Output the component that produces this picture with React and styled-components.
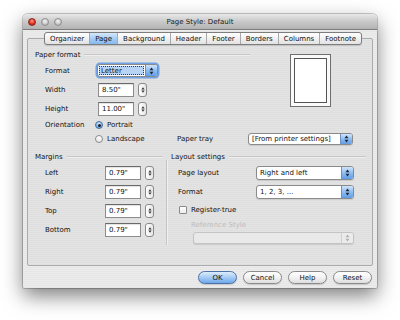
import React from 'react';
import styled, { createGlobalStyle, css } from 'styled-components';

const GlobalStyle = createGlobalStyle`
  body {
    margin: 0;
    background: #ffffff;
    font-family: "DejaVu Sans", "Liberation Sans", sans-serif;
    font-size: 7px;
    color: #111111;
  }
`;

const Stage = styled.div`
  width: 400px;
  height: 320px;
  box-sizing: border-box;
  padding: 14px 0 0 23px;
`;

const Window = styled.div`
  width: 354px;
  height: 274px;
  display: flex;
  flex-direction: column;
  border-radius: 5px 5px 2px 2px;
  overflow: hidden;
  background: repeating-linear-gradient(180deg, #ececec 0 1px, #e6e6e6 1px 2px);
  box-shadow: 0 8px 20px rgba(0, 0, 0, 0.5), 0 0 0 1px rgba(0, 0, 0, 0.2);
`;

const TitleBar = styled.div`
  height: 15px;
  display: grid;
  grid-template-columns: 1fr auto 1fr;
  align-items: center;
  padding: 0 5px;
  background: linear-gradient(180deg, #e8e8e8 0%, #c9c9c9 50%, #b3b3b3 100%);
  border-bottom: 1px solid #7c7c7c;
`;

const Lights = styled.div`
  display: flex;
  gap: 5px;
`;

const Light = styled.span`
  width: 8px;
  height: 8px;
  border-radius: 50%;
  box-sizing: border-box;
  ${(p) =>
    p.$red
      ? css`
          background: radial-gradient(circle at 50% 35%, #ff9a8c 0%, #e2321e 55%, #a01508 100%);
          border: 1px solid #8a2a20;
        `
      : css`
          background: radial-gradient(circle at 50% 35%, #f4f4f4 0%, #c8c8c8 60%, #a8a8a8 100%);
          border: 1px solid #8e8e8e;
        `}
`;

const Title = styled.div`
  color: #1a1a1a;
  font-size: 7px;
`;

const Body = styled.div`
  flex: 1;
  display: flex;
  flex-direction: column;
  padding: 2px 4px 0;
`;

const TabStrip = styled.div`
  position: relative;
  z-index: 1;
  align-self: center;
  display: flex;
  height: 13px;
  margin: 0 0 -7px 6px;
  box-sizing: border-box;
  border: 1px solid #7d7d7d;
  border-radius: 3px;
  overflow: hidden;
  background: linear-gradient(180deg, #ffffff 0%, #f1f1f1 50%, #e2e2e2 100%);
  box-shadow: 0 1px 1px rgba(0, 0, 0, 0.15);
`;

const Tab = styled.div`
  display: flex;
  align-items: center;
  padding: 0 5px;
  border-left: 1px solid #a9a9a9;
  &:first-child {
    border-left: none;
  }
  ${(p) =>
    p.$active &&
    css`
      background: linear-gradient(180deg, #d6e9fb 0%, #a9cdf3 50%, #86b8ee 100%);
    `}
`;

const Panel = styled.div`
  height: 228px;
  box-sizing: border-box;
  border: 1px solid #ababab;
  border-radius: 2px;
  padding: 10px 0 0 7px;
  background: repeating-linear-gradient(180deg, #e3e3e3 0 1px, #dfdfdf 1px 2px);
`;

const SectionHeader = styled.div`
  display: flex;
  align-items: center;
  gap: 4px;
  height: 12px;
  width: ${(p) => p.$width}px;
  &::after {
    content: '';
    flex: 1;
    height: 1px;
    background: #c6c6c6;
    border-bottom: 1px solid #efefef;
  }
`;

const Row = styled.div`
  display: flex;
  align-items: center;
  height: ${(p) => p.$h}px;
  padding-left: ${(p) => p.$pad || 0}px;
`;

const Label = styled.div`
  width: ${(p) => p.$w}px;
  box-sizing: border-box;
  padding-left: ${(p) => (p.$pad === undefined ? 10 : p.$pad)}px;
  flex-shrink: 0;
  color: ${(p) => (p.$disabled ? '#bdbdbd' : '#111111')};
`;

const TopArea = styled.div`
  display: flex;
`;

const Column = styled.div`
  display: flex;
  flex-direction: column;
  width: ${(p) => p.$w}px;
  flex-shrink: 0;
`;

const Preview = styled.div`
  margin: 5px 0 0 40px;
  width: 41px;
  height: 53px;
  box-sizing: border-box;
  border: 1px solid #6e6e6e;
  padding: 3px;
  background: #fafafa;
`;

const PreviewPage = styled.div`
  height: 100%;
  box-sizing: border-box;
  border: 1px solid #555;
  background: #ffffff;
`;

const Input = styled.div`
  width: 36px;
  height: 14px;
  box-sizing: border-box;
  margin-left: ${(p) => p.$ml || 0}px;
  border: 1px solid #8c8c8c;
  border-top-color: #6a6a6a;
  background: #ffffff;
  box-shadow: inset 0 1px 1px rgba(0, 0, 0, 0.12);
  display: flex;
  align-items: center;
  padding-left: 3px;
`;

const StepperBox = styled.div`
  width: 9px;
  height: 14px;
  margin-left: 4px;
  box-sizing: border-box;
  border: 1px solid #8a8a8a;
  border-radius: 3px;
  background: linear-gradient(90deg, #ffffff 0%, #e6e6e6 100%);
  display: flex;
  align-items: center;
  justify-content: center;
`;

const SelectBox = styled.div`
  display: flex;
  width: ${(p) => p.$w}px;
  height: ${(p) => p.$h}px;
  box-sizing: border-box;
  border: 1px solid ${(p) => (p.$disabled ? '#c4c4c4' : '#8a8a8a')};
  border-radius: 3px;
  overflow: hidden;
  background: ${(p) => (p.$disabled ? '#e9e9e9' : '#ffffff')};
  box-shadow: ${(p) =>
    p.$focus ? '0 0 0 1.5px rgba(92, 150, 228, 0.85)' : '0 1px 1px rgba(0,0,0,0.1)'};
`;

const SelectText = styled.div`
  flex: 1;
  display: flex;
  align-items: center;
  padding: 1px;
`;

const SelectValue = styled.span`
  display: flex;
  align-items: center;
  height: 100%;
  padding: 0 2px;
  ${(p) =>
    p.$focus &&
    css`
      flex: 1;
      background: #b7d4f6;
      outline: 1px dotted #3a3a3a;
      outline-offset: -1px;
    `}
`;

const ArrowCap = styled.div`
  width: 11px;
  display: flex;
  align-items: center;
  justify-content: center;
  border-left: 1px solid ${(p) => (p.$disabled ? '#d0d0d0' : '#6e8fbf')};
  background: ${(p) =>
    p.$disabled
      ? '#ebebeb'
      : 'linear-gradient(180deg, #cfe4fb 0%, #8fbdf0 50%, #5f9ce6 100%)'};
`;

const RadioDot = styled.span`
  width: 8px;
  height: 8px;
  box-sizing: border-box;
  border-radius: 50%;
  flex-shrink: 0;
  display: flex;
  align-items: center;
  justify-content: center;
  ${(p) =>
    p.$on
      ? css`
          border: 1px solid #4a6f9f;
          background: radial-gradient(circle at 50% 30%, #d9ebfc 0%, #7fb2ec 60%, #4e8ad8 100%);
          &::after {
            content: '';
            width: 3px;
            height: 3px;
            border-radius: 50%;
            background: #1a2330;
          }
        `
      : css`
          border: 1px solid #8a8a8a;
          background: linear-gradient(180deg, #ffffff 0%, #e6e6e6 100%);
        `}
`;

const RadioItem = styled.div`
  display: flex;
  align-items: center;
  gap: 4px;
  width: ${(p) => (p.$w ? `${p.$w}px` : 'auto')};
  flex-shrink: 0;
`;

const CheckBox = styled.span`
  width: 8px;
  height: 8px;
  box-sizing: border-box;
  border: 1px solid #8a8a8a;
  border-radius: 1px;
  background: linear-gradient(180deg, #ffffff 0%, #ececec 100%);
  margin-right: 4px;
`;

const BottomArea = styled.div`
  display: flex;
  margin-top: 5px;
`;

const Divider = styled.div`
  width: 1px;
  margin: 9px 3px 0 3px;
  background: #c4c4c4;
  border-right: 1px solid #f0f0f0;
`;

const ButtonRow = styled.div`
  display: flex;
  justify-content: flex-end;
  gap: 6px;
  padding: 5px 1px 0 0;
`;

const Button = styled.div`
  width: 39px;
  height: 13px;
  box-sizing: border-box;
  border-radius: 7px;
  display: flex;
  align-items: center;
  justify-content: center;
  border: 1px solid ${(p) => (p.$primary ? '#4f72a6' : '#8a8a8a')};
  background: ${(p) =>
    p.$primary
      ? 'linear-gradient(180deg, #dcecfc 0%, #a5cbf4 50%, #6ea9ec 100%)'
      : 'linear-gradient(180deg, #ffffff 0%, #f2f2f2 50%, #dedede 100%)'};
  box-shadow: 0 1px 1px rgba(0, 0, 0, 0.15);
`;

const UpDown = ({ color = '#1d2735', w = 5, h = 8 }) => (
  <svg width={w} height={h} viewBox="0 0 5 8">
    <polygon points="0.5,3.3 2.5,0.6 4.5,3.3" fill={color} />
    <polygon points="0.5,4.7 2.5,7.4 4.5,4.7" fill={color} />
  </svg>
);

const Stepper = () => (
  <StepperBox>
    <UpDown color="#333" w={4} h={8} />
  </StepperBox>
);

const Select = ({ value, w, h = 13, focus, disabled }) => (
  <SelectBox $w={w} $h={h} $focus={focus} $disabled={disabled}>
    <SelectText>
      <SelectValue $focus={focus}>{value}</SelectValue>
    </SelectText>
    <ArrowCap $disabled={disabled}>
      <UpDown color={disabled ? '#b0b0b0' : '#1d2735'} />
    </ArrowCap>
  </SelectBox>
);

const tabs = ['Organizer', 'Page', 'Background', 'Header', 'Footer', 'Borders', 'Columns', 'Footnote'];
const margins = ['Left', 'Right', 'Top', 'Bottom'];

const App = () => {
  return (
    <>
      <GlobalStyle />
      <Stage>
        <Window>
          <TitleBar>
            <Lights>
              <Light $red />
              <Light />
              <Light />
            </Lights>
            <Title>Page Style: Default</Title>
            <span />
          </TitleBar>

          <Body>
            <TabStrip>
              {tabs.map((t) => (
                <Tab key={t} $active={t === 'Page'}>{t}</Tab>
              ))}
            </TabStrip>

            <Panel>
              {/* Paper format */}
              <TopArea>
                <Column $w={215}>
                  <SectionHeader $width={215}>Paper format</SectionHeader>
                  <Row $h={19}>
                    <Label $w={62}>Format</Label>
                    <Select value="Letter" w={61} focus />
                  </Row>
                  <Row $h={19}>
                    <Label $w={62}>Width</Label>
                    <Input $ml={1}>8.50"</Input>
                    <Stepper />
                  </Row>
                  <Row $h={19}>
                    <Label $w={62}>Height</Label>
                    <Input $ml={1}>11.00"</Input>
                    <Stepper />
                  </Row>
                  <Row $h={14}>
                    <Label $w={60}>Orientation</Label>
                    <RadioItem>
                      <RadioDot $on />
                      Portrait
                    </RadioItem>
                  </Row>
                </Column>
                <Preview>
                  <PreviewPage />
                </Preview>
              </TopArea>
              <Row $h={14}>
                <Label $w={60} />
                <RadioItem $w={82}>
                  <RadioDot />
                  Landscape
                </RadioItem>
                <Label $w={71} $pad={0}>Paper tray</Label>
                <Select value="[From printer settings]" w={105} h={12} />
              </Row>

              <BottomArea>
                {/* Margins */}
                <Column $w={128}>
                  <SectionHeader $width={128}>Margins</SectionHeader>
                  {margins.map((m) => (
                    <Row key={m} $h={19}>
                      <Label $w={70}>{m}</Label>
                      <Input>0.79"</Input>
                      <Stepper />
                    </Row>
                  ))}
                </Column>

                <Divider />

                {/* Layout settings */}
                <Column $w={195}>
                  <SectionHeader $width={195}>Layout settings</SectionHeader>
                  <Row $h={19}>
                    <Label $w={85} $pad={7}>Page layout</Label>
                    <Select value="Right and left" w={98} h={14} />
                  </Row>
                  <Row $h={19}>
                    <Label $w={85} $pad={7}>Format</Label>
                    <Select value="1, 2, 3, ..." w={98} h={14} />
                  </Row>
                  <Row $h={18} $pad={8}>
                    <CheckBox />
                    Register-true
                  </Row>
                  <Row $h={12}>
                    <Label $w={120} $pad={20} $disabled>Reference Style</Label>
                  </Row>
                  <Row $h={14} $pad={22}>
                    <Select value="" w={161} h={12} disabled />
                  </Row>
                </Column>
              </BottomArea>
            </Panel>

            <ButtonRow>
              <Button $primary>OK</Button>
              <Button>Cancel</Button>
              <Button>Help</Button>
              <Button>Reset</Button>
            </ButtonRow>
          </Body>
        </Window>
      </Stage>
    </>
  );
};

export default App;
